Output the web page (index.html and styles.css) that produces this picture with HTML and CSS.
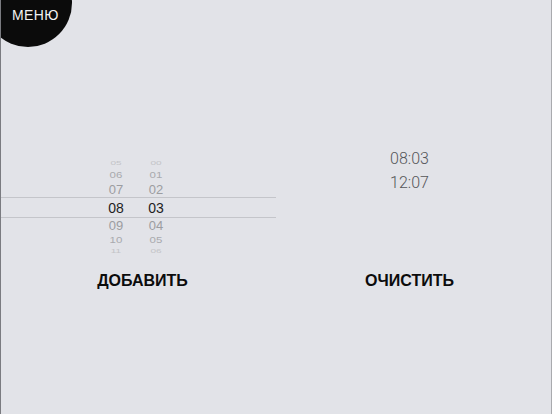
FILE: index.html
```html
<!DOCTYPE html>
<html lang="ru">
<head>
<meta charset="utf-8">
<title>Будильник</title>
<link rel="stylesheet" href="styles.css">
</head>
<body>
<div class="screen">
  <div class="menu"><span class="menu-label">МЕНЮ</span></div>
  <div class="panels">
    <section class="panel panel-left">
      <div class="panel-content">
        <div class="picker">
          <div class="row r-edge"><span class="cell">05</span><span class="cell">00</span></div>
          <div class="row r-far"><span class="cell">06</span><span class="cell">01</span></div>
          <div class="row r-near"><span class="cell">07</span><span class="cell">02</span></div>
          <div class="row r-sel"><span class="cell">08</span><span class="cell">03</span></div>
          <div class="row r-near"><span class="cell">09</span><span class="cell">04</span></div>
          <div class="row r-far"><span class="cell">10</span><span class="cell">05</span></div>
          <div class="row r-edge r-edge-bottom"><span class="cell">11</span><span class="cell">06</span></div>
        </div>
      </div>
      <div class="btn btn-left">ДОБАВИТЬ</div>
    </section>
    <section class="panel panel-right">
      <div class="panel-content">
        <ul class="times">
          <li>08:03</li>
          <li>12:07</li>
        </ul>
      </div>
      <div class="btn btn-right">ОЧИСТИТЬ</div>
    </section>
  </div>
</div>
</body>
</html>
```
FILE: styles.css
```css
html, body {
  margin: 0;
  padding: 0;
}
body {
  background: #e2e3e8;
  font-family: "Liberation Sans", Arial, sans-serif;
  overflow: hidden;
}
.screen {
  position: relative;
  width: 552px;
  height: 414px;
  box-sizing: border-box;
  border-left: 1px solid #7a7b80;
  border-right: 1px solid #a9aaae;
  background: #e2e3e8;
  overflow: hidden;
}
.menu {
  position: absolute;
  left: -17px;
  top: -41px;
  width: 88px;
  height: 88px;
  border-radius: 50%;
  background: #0b0b0b;
}
.menu-label {
  position: absolute;
  left: 28px;
  top: 48px;
  color: #f2f2f2;
  font-size: 14px;
  letter-spacing: 0.4px;
  line-height: 16px;
}
.panels {
  display: grid;
  grid-template-columns: 275px 275px;
  padding-top: 147px;
}
.panel {
  display: flex;
  flex-direction: column;
}
.panel-content {
  height: 124px;
}
.picker {
  margin-top: 11px;
  display: flex;
  flex-direction: column;
}
.row {
  display: flex;
  justify-content: center;
  align-items: center;
  gap: 10px;
  padding-right: 5px;
  overflow: hidden;
  color: #a4a5a9;
}
.cell {
  width: 30px;
  text-align: center;
}
.r-edge {
  height: 10px;
  font-size: 10px;
  color: #c2c3c7;
}
.r-edge .cell {
  transform: scaleY(0.45);
}
.r-far {
  height: 14px;
  font-size: 11.5px;
  color: #a9aaae;
}
.r-far .cell {
  transform: scaleY(0.8);
}
.r-near {
  height: 15px;
  font-size: 13px;
  color: #9c9da1;
}
.r-near .cell {
  transform: scaleY(0.94);
}
.r-sel {
  height: 19px;
  font-size: 14px;
  color: #1e1e1e;
  border-top: 1px solid #c4c5ca;
  border-bottom: 1px solid #c4c5ca;
}
.r-edge-bottom {
  height: 8px;
}
.times {
  list-style: none;
  margin: 0;
  padding: 0 8px 0 0;
  text-align: center;
  font-family: Roboto, "Liberation Sans", sans-serif;
  font-weight: 300;
  font-size: 16px;
  line-height: 24px;
  color: #555659;
}
.btn {
  font-weight: bold;
  font-size: 16px;
  line-height: 20px;
  color: #0c0c0c;
  text-align: center;
}
.btn-left {
  padding-left: 8px;
}
.btn-right {
  padding-right: 8px;
}
```
